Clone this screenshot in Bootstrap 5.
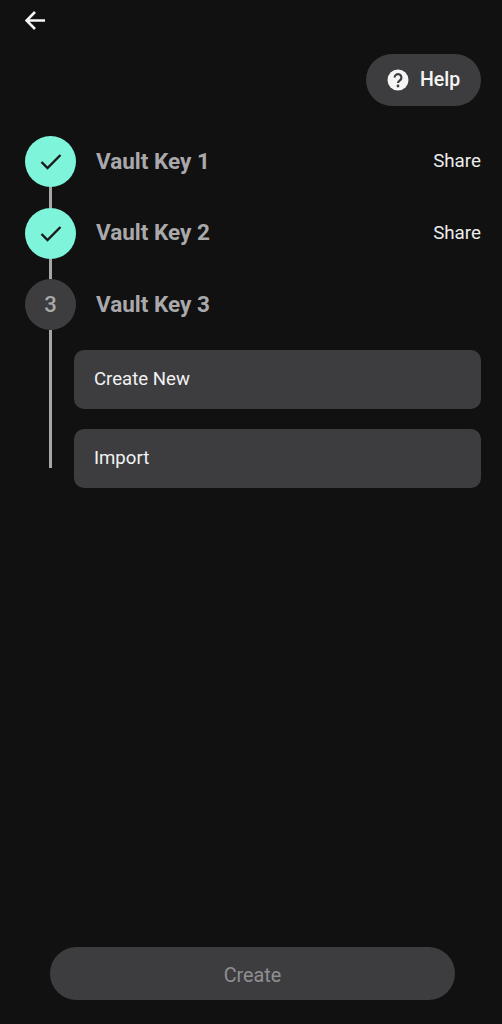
<!DOCTYPE html>
<html lang="en">

<head>
  <meta charset="UTF-8">
  <title>Vault Keys</title>
  <link href="https://cdn.jsdelivr.net/npm/bootstrap@5.3.3/dist/css/bootstrap.min.css" rel="stylesheet">
  <script src="https://cdn.jsdelivr.net/npm/bootstrap@5.3.3/dist/js/bootstrap.bundle.min.js"></script>
  <style>
    body {
      background-color: #111112;
      color: #f2f2f2;
      font-family: Roboto, "Liberation Sans", sans-serif;
    }

    .screen {
      height: 1024px;
      padding: 11px 21px 24px 25px;
    }

    .back-arrow {
      height: 19px;
      line-height: 0;
    }

    .help-pill {
      width: 115px;
      height: 52px;
      margin-top: 24px;
      margin-bottom: 30px;
      background-color: #3d3d3f;
      color: #f5f5f5;
      font-size: 19.5px;
      font-weight: 500;
      border-radius: 26px;
      border: 0;
      gap: 11px;
    }

    .step-col {
      width: 51px;
      flex-shrink: 0;
    }

    .step-circle {
      width: 51px;
      height: 51px;
      flex-shrink: 0;
      border-radius: 50%;
    }

    .step-done {
      background-color: #7ef4da;
    }

    .step-current {
      background-color: #3d3d3f;
      color: #a9a9ab;
      font-size: 22px;
      font-weight: 500;
    }

    .step-line {
      width: 3px;
      height: 20.5px;
      background-color: #a6a6a6;
    }

    .step-line-long {
      height: 138px;
    }

    .step-title {
      color: #a9a9ab;
      font-size: 22.5px;
      font-weight: 700;
      margin-left: 20px;
    }

    .step-head {
      height: 51px;
    }

    .share-link {
      color: #ececec;
      font-size: 18.8px;
    }

    .step-options {
      margin-left: -2px;
      margin-top: 20px;
      gap: 20px;
    }

    .option-btn {
      height: 59px;
      padding-left: 20px;
      background-color: #3d3d3f;
      color: #f2f2f2;
      font-size: 18.6px;
      border: 0;
      border-radius: 10px;
    }

    .create-btn {
      width: 405px;
      height: 53px;
      margin-left: 25px;
      padding-top: 5px;
      background-color: #3d3d3f;
      color: #8f8f91;
      font-size: 19.8px;
      border: 0;
      border-radius: 27px;
    }
  </style>
</head>

<body>
  <div class="screen d-flex flex-column">
    <div class="back-arrow">
      <svg width="20" height="19" viewBox="0 0 20 19" fill="none" stroke="#f5f5f5" stroke-width="2.6">
        <path d="M20 9.5H2M10 1 1.5 9.5 10 18" />
      </svg>
    </div>

    <div class="d-flex justify-content-end">
      <button type="button" class="help-pill d-flex align-items-center justify-content-center">
        <svg width="22" height="22" viewBox="0 0 22 22">
          <circle cx="11" cy="11" r="10.5" fill="#f5f5f5" />
          <path d="M7.6 8.5a3.4 3.4 0 1 1 5.3 2.8c-1.3.9-1.9 1.4-1.9 2.7" fill="none" stroke="#3d3d3f" stroke-width="2.2" />
          <circle cx="11" cy="17" r="1.4" fill="#3d3d3f" />
        </svg>
        Help
      </button>
    </div>

    <div class="d-flex">
      <div class="step-col d-flex flex-column align-items-center">
        <div class="step-circle step-done d-flex align-items-center justify-content-center">
          <svg width="22" height="17" viewBox="0 0 22 17" fill="none" stroke="#1a1a1a" stroke-width="2.4">
            <path d="M1.5 9 7.5 15 20.5 2" />
          </svg>
        </div>
        <div class="step-line"></div>
      </div>
      <div class="step-head flex-grow-1 d-flex align-items-center justify-content-between">
        <span class="step-title">Vault Key 1</span>
        <span class="share-link">Share</span>
      </div>
    </div>

    <div class="d-flex">
      <div class="step-col d-flex flex-column align-items-center">
        <div class="step-circle step-done d-flex align-items-center justify-content-center">
          <svg width="22" height="17" viewBox="0 0 22 17" fill="none" stroke="#1a1a1a" stroke-width="2.4">
            <path d="M1.5 9 7.5 15 20.5 2" />
          </svg>
        </div>
        <div class="step-line"></div>
      </div>
      <div class="step-head flex-grow-1 d-flex align-items-center justify-content-between">
        <span class="step-title">Vault Key 2</span>
        <span class="share-link">Share</span>
      </div>
    </div>

    <div class="d-flex">
      <div class="step-col d-flex flex-column align-items-center">
        <div class="step-circle step-current d-flex align-items-center justify-content-center">3</div>
        <div class="step-line step-line-long"></div>
      </div>
      <div class="flex-grow-1">
        <div class="step-head d-flex align-items-center">
          <span class="step-title">Vault Key 3</span>
        </div>
        <div class="step-options d-flex flex-column">
          <button type="button" class="option-btn text-start">Create New</button>
          <button type="button" class="option-btn text-start">Import</button>
        </div>
      </div>
    </div>

    <button type="button" class="create-btn mt-auto">Create</button>
  </div>
</body>

</html>
